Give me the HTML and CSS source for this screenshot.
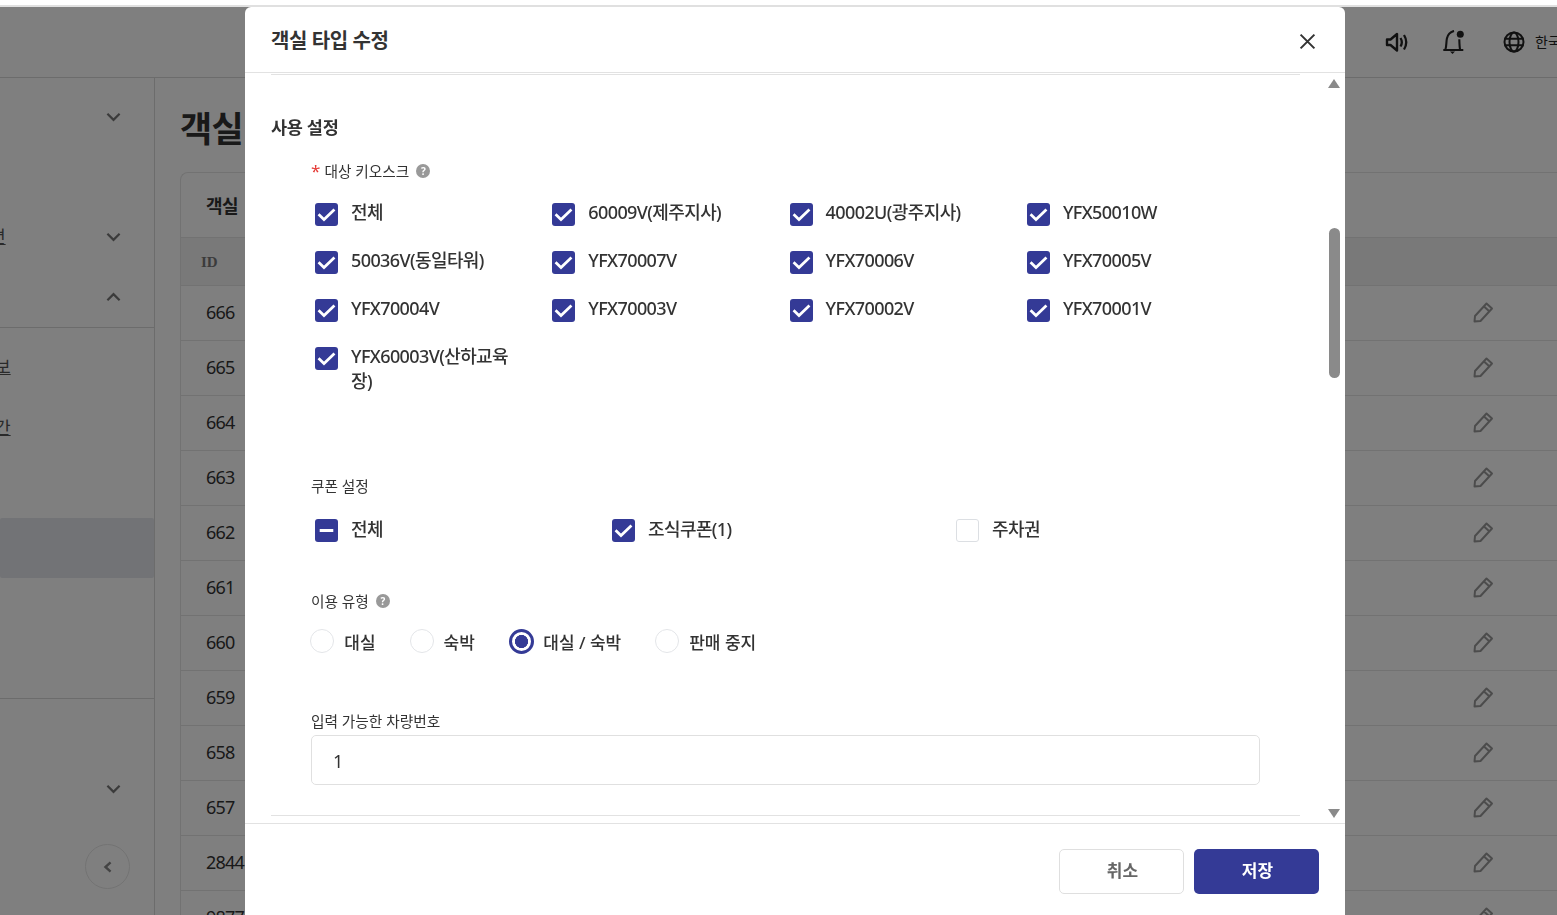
FILE: index.html
```html
<!DOCTYPE html>
<html lang="ko">
<head>
<meta charset="utf-8">
<title>객실 타입 수정</title>
<link rel="stylesheet" href="styles.css">
</head>
<body>
<svg class="sprites" width="0" height="0" aria-hidden="true">
  <symbol id="chev" viewBox="0 0 16 10"><path d="M1.500 1.500 8 8l6.500-6.500" fill="none" stroke="currentColor" stroke-width="2.400"/></symbol>
  <symbol id="pencil" viewBox="0 0 24 24"><path d="M3.500 21.500 4 16 15.500 3.500 21 8.500 9.500 21 3.500 21.500ZM13 6.500l5.500 5" fill="none" stroke="currentColor" stroke-width="2" stroke-linejoin="round"/></symbol>
  <symbol id="check" viewBox="0 0 22 22"><path d="M3.400 10.800 8.600 15.800 18.600 6.200" fill="none" stroke="#fff" stroke-width="2.600"/></symbol>
  <symbol id="dash" viewBox="0 0 22 22"><path d="M4.500 11h13" fill="none" stroke="#fff" stroke-width="2.800"/></symbol>
</svg>
<div class="page">
  <header class="topbar">
    <svg class="ico ico-sound" viewBox="0 0 24 24"><path d="M3 9.500h3.500L13 4v16.500L6.500 15H3z" fill="none" stroke="currentColor" stroke-width="2.400" stroke-linejoin="round"/><path d="M16.500 8c1.600 2.600 1.600 6 0 8.500M20 5c2.800 4.500 2.800 10 0 14.500" fill="none" stroke="currentColor" stroke-width="2.300"/></svg>
    <svg class="ico ico-bell" viewBox="0 0 24 28"><path d="M1.300 20h20M3.300 20c1.400-4 .8-8 1.600-11.500C5.800 4.500 8.500 1.800 12 .9M17.300 9.300c.1 3.800.2 7.500.8 10.700" fill="none" stroke="currentColor" stroke-width="2.100"/><path d="M8 21.500h5L10.500 24z" fill="currentColor"/><circle cx="18.300" cy="4.300" r="3.500" fill="currentColor"/></svg>
    <svg class="ico ico-globe" viewBox="0 0 24 24"><g fill="none" stroke="currentColor" stroke-width="2"><circle cx="12" cy="12" r="9.500"/><ellipse cx="12" cy="12" rx="4.500" ry="9.500"/><path d="M2.500 8.700h19M2.500 15.300h19"/></g></svg>
    <span class="lang">한국어</span>
  </header>
  <div class="layout">
    <aside class="side">
      <div class="side-group">
        <div class="side-row"><svg class="chev"><use href="#chev"/></svg></div>
        <div class="side-row"></div>
        <div class="side-row"><span class="side-text side-text-near">면</span><svg class="chev"><use href="#chev"/></svg></div>
        <div class="side-row"><svg class="chev chev-up"><use href="#chev"/></svg></div>
      </div>
      <div class="side-group side-group-b">
        <div class="side-row"><span class="side-text">보</span></div>
        <div class="side-row"><span class="side-text side-text-low">간</span></div>
        <div class="side-row"></div>
        <div class="side-row side-row-active"></div>
        <div class="side-row"></div>
        <div class="side-row"></div>
      </div>
      <div class="side-group side-group-c">
        <div class="side-row"></div>
        <div class="side-row"><svg class="chev"><use href="#chev"/></svg></div>
      </div>
      <div class="collapse"><svg viewBox="0 0 14 16"><path d="M10 2.500 4 8l6 5.500" fill="none" stroke="currentColor" stroke-width="2.800"/></svg></div>
    </aside>
    <main class="main">
      <h1 class="main-title">객실</h1>
      <section class="card">
        <div class="card-title">객실</div>
        <div class="tr tr-head"><span class="td-id">ID</span></div>
        <div class="tr"><span class="td">666</span><svg class="pen"><use href="#pencil"/></svg></div>
        <div class="tr"><span class="td">665</span><svg class="pen"><use href="#pencil"/></svg></div>
        <div class="tr"><span class="td">664</span><svg class="pen"><use href="#pencil"/></svg></div>
        <div class="tr"><span class="td">663</span><svg class="pen"><use href="#pencil"/></svg></div>
        <div class="tr"><span class="td">662</span><svg class="pen"><use href="#pencil"/></svg></div>
        <div class="tr"><span class="td">661</span><svg class="pen"><use href="#pencil"/></svg></div>
        <div class="tr"><span class="td">660</span><svg class="pen"><use href="#pencil"/></svg></div>
        <div class="tr"><span class="td">659</span><svg class="pen"><use href="#pencil"/></svg></div>
        <div class="tr"><span class="td">658</span><svg class="pen"><use href="#pencil"/></svg></div>
        <div class="tr"><span class="td">657</span><svg class="pen"><use href="#pencil"/></svg></div>
        <div class="tr"><span class="td">2844</span><svg class="pen"><use href="#pencil"/></svg></div>
        <div class="tr"><span class="td">9877</span><svg class="pen"><use href="#pencil"/></svg></div>
      </section>
    </main>
  </div>
</div>
<div class="backdrop"></div>
<div class="modal" role="dialog">
  <div class="modal-head">
    <h2 class="modal-title">객실 타입 수정</h2>
    <svg class="close" viewBox="0 0 16 16"><path d="M1.500 1.500l13 13M14.500 1.500l-13 13" fill="none" stroke="currentColor" stroke-width="1.900"/></svg>
  </div>
  <div class="modal-body">
    <div class="scroll-content">
      <h3 class="section-title">사용 설정</h3>
      <div class="field-label field-label-kiosk"><span class="req">*</span> 대상 키오스크 <span class="help">?</span></div>
      <div class="check-grid">
        <label class="check"><svg class="box"><use href="#check"/></svg><span>전체</span></label>
        <label class="check"><svg class="box"><use href="#check"/></svg><span>60009V(제주지사)</span></label>
        <label class="check"><svg class="box"><use href="#check"/></svg><span>40002U(광주지사)</span></label>
        <label class="check"><svg class="box"><use href="#check"/></svg><span>YFX50010W</span></label>
        <label class="check"><svg class="box"><use href="#check"/></svg><span>50036V(동일타워)</span></label>
        <label class="check"><svg class="box"><use href="#check"/></svg><span>YFX70007V</span></label>
        <label class="check"><svg class="box"><use href="#check"/></svg><span>YFX70006V</span></label>
        <label class="check"><svg class="box"><use href="#check"/></svg><span>YFX70005V</span></label>
        <label class="check"><svg class="box"><use href="#check"/></svg><span>YFX70004V</span></label>
        <label class="check"><svg class="box"><use href="#check"/></svg><span>YFX70003V</span></label>
        <label class="check"><svg class="box"><use href="#check"/></svg><span>YFX70002V</span></label>
        <label class="check"><svg class="box"><use href="#check"/></svg><span>YFX70001V</span></label>
        <label class="check"><svg class="box"><use href="#check"/></svg><span>YFX60003V(산하교육장)</span></label>
      </div>
      <div class="field-label field-label-coupon">쿠폰 설정</div>
      <div class="coupon-row">
        <label class="check"><svg class="box"><use href="#dash"/></svg><span>전체</span></label>
        <label class="check"><svg class="box"><use href="#check"/></svg><span>조식쿠폰(1)</span></label>
        <label class="check"><span class="box-empty"></span><span>주차권</span></label>
      </div>
      <div class="field-label field-label-type">이용 유형 <span class="help">?</span></div>
      <div class="radio-row">
        <label class="radio"><span class="dot"></span>대실</label>
        <label class="radio"><span class="dot"></span>숙박</label>
        <label class="radio"><span class="dot dot-on"></span>대실 / 숙박</label>
        <label class="radio"><span class="dot"></span>판매 중지</label>
      </div>
      <div class="field-label field-label-car">입력 가능한 차량번호</div>
      <div class="text-input">1</div>
    </div>
    <div class="scrollbar">
      <span class="arrow arrow-up"></span>
      <span class="thumb"></span>
      <span class="arrow arrow-down"></span>
    </div>
  </div>
  <div class="modal-foot">
    <button class="btn btn-cancel" type="button">취소</button>
    <button class="btn btn-save" type="button">저장</button>
  </div>
</div>
</body>
</html>
```
FILE: styles.css
```css
* { box-sizing: border-box; }
html, body { margin: 0; height: 915px; overflow: hidden; }
body {
  font-family: "Noto Sans", "Noto Sans CJK KR", sans-serif;
  color: #333;
  background: #fff;
  position: relative;
  border-top: 5px solid #fff;
}
.sprites { position: absolute; }

.page { height: 910px; overflow: hidden; border-top: 2px solid #e0e0e0; }
.topbar {
  height: 71px;
  border-bottom: 1px solid #d9d9d9;
  color: #222;
  position: relative;
}
.ico { position: absolute; }
.ico-sound { left: 1384px; top: 23px; width: 24px; height: 24px; }
.ico-bell { left: 1442px; top: 23px; width: 24px; height: 28px; }
.ico-globe { left: 1502px; top: 23px; width: 24px; height: 24px; }
.lang { position: absolute; left: 1535px; top: 24px; font-size: 14px; white-space: nowrap; }

.layout { display: flex; height: 837px; }
.side {
  width: 155px;
  flex: none;
  border-right: 1px solid #d9d9d9;
  padding-top: 9px;
  position: relative;
}
.side-group { border-bottom: 1px solid #d9d9d9; }
.side-group-b { padding-top: 10px; }
.side-group-c { border-bottom: 0; }
.side-row { height: 60px; display: flex; align-items: center; position: relative; }
.side-row-active { background: #e4e7ec; border-radius: 2px; }
.side-text { font-size: 17px; color: #555; margin-left: -5px; padding-bottom: 5px; text-decoration: underline; }
.side-text-near { margin-left: -10px; padding-bottom: 3px; }
.side-text-low { padding-bottom: 3px; }
.chev { position: absolute; left: 106px; top: 25px; width: 15px; height: 10px; color: #777; }
.chev-up { transform: rotate(180deg); }
.collapse {
  position: absolute;
  left: 85px;
  top: 766px;
  width: 45px;
  height: 45px;
  border: 1px solid #e6e6e6;
  border-radius: 50%;
  display: flex;
  align-items: center;
  justify-content: center;
  color: #888;
}
.collapse svg { width: 12px; height: 16px; }

.main { flex: 1; padding: 27px 0 0 25px; min-width: 0; }
.main-title { margin: 0 0 19px; font-size: 35px; line-height: 48px; font-weight: 700; color: #333; letter-spacing: -.6px; }
.card { border: 1px solid #e4e4e4; border-right: 0; border-radius: 8px 0 0 0; }
.card-title { height: 64px; padding-left: 25px; font-size: 18px; font-weight: 700; line-height: 66px; letter-spacing: -.5px; }
.tr {
  height: 55px;
  border-top: 1px solid #e4e4e4;
  display: flex;
  align-items: center;
  padding: 0 0 2px 25px;
  position: relative;
}
.tr-head { height: 48px; background: #f3f3f3; padding: 2px 0 0 20px; }
.td { font-size: 18px; letter-spacing: -.8px; color: #333; }
.td-id { font-family: "Liberation Serif", serif; font-size: 15px; font-weight: 700; color: #777; }
.pen { position: absolute; left: 1290px; top: 14px; width: 24px; height: 24px; color: #999; }

.backdrop { position: fixed; inset: 7px 0 0; background: rgba(0, 0, 0, .5); }

.modal {
  position: fixed;
  left: 245px;
  top: 7px;
  width: 1100px;
  height: 908px;
  background: #fff;
  border-radius: 6px 6px 0 0;
  display: flex;
  flex-direction: column;
}
.modal-head {
  height: 66px;
  flex: none;
  border-bottom: 1px solid #e2e2e2;
  display: flex;
  align-items: center;
  justify-content: space-between;
  padding: 2px 29px 0 26px;
}
.modal-title { margin: 0 0 2px; font-size: 20px; font-weight: 700; color: #333; letter-spacing: -.4px; }
.close { width: 17px; height: 17px; margin-top: 1px; color: #333; }

.modal-body { height: 750px; flex: none; position: relative; padding: 1px 45px 0 26px; overflow: hidden; }
.scroll-content {
  height: 742px;
  border-top: 1px solid #e2e2e2;
  border-bottom: 1px solid #e2e2e2;
  padding: 39px 0 0 40px;
  overflow: hidden;
}
.section-title { margin: 0 0 21px -40px; font-size: 17.500px; line-height: 26px; font-weight: 700; color: #333; letter-spacing: -.3px; }
.field-label { font-size: 14.700px; line-height: 20px; color: #333; display: flex; align-items: center; gap: 5px; height: 20px; }
.field-label-kiosk { margin-bottom: 20px; }
.field-label-coupon { margin-top: 30px; margin-bottom: 21px; }
.field-label-type { margin-top: 46px; margin-bottom: 17px; }
.field-label-car { margin-top: 57px; margin-bottom: 4px; }
.req { color: #e53935; font-size: 17px; margin-right: -1px; }
.help {
  width: 14px;
  height: 14px;
  margin-left: 2px;
  border-radius: 50%;
  background: #999;
  color: #fff;
  font-size: 10px;
  font-weight: 700;
  line-height: 14px;
  text-align: center;
}

.check-grid {
  display: grid;
  grid-template-columns: repeat(4, 237.300px);
  grid-auto-rows: 48px;
  padding-left: 4px;
  height: 245px;
}
.check { display: flex; align-items: flex-start; gap: 13px; font-size: 18px; font-weight: 500; line-height: 25px; letter-spacing: -.6px; color: #333; }
.check > span:last-child { width: 165px; word-break: break-all; }
.check-grid .check > span:last-child { margin-top: -1px; }
.box { width: 23px; height: 23px; flex: none; background: #343a96; border-radius: 3px; margin-top: 2px; }
.box-empty { width: 23px; height: 23px; flex: none; border: 1px solid #dcdfe3; border-radius: 3px; margin-top: 2px; }
.coupon-row { display: grid; grid-template-columns: 297px 344px 1fr; padding-left: 4px; height: 28px; }

.radio-row { display: flex; height: 26px; align-items: center; margin-left: -.7px; }
.radio { display: flex; align-items: center; gap: 10px; font-size: 17px; font-weight: 500; letter-spacing: 0; color: #333; margin-right: 34px; }
.dot { width: 24px; height: 24px; border-radius: 50%; border: 1px solid #e3e5e8; flex: none; }
.dot-on { width: 25px; height: 25px; margin-right: -.6px; border: 3px solid #343a96; background: radial-gradient(circle, #343a96 0 6.300px, #fff 6.800px); }

.text-input {
  width: 949px;
  height: 50px;
  border: 1px solid #e0e0e0;
  border-radius: 5px;
  padding-left: 21px;
  font-size: 18px;
  line-height: 50px;
}

.scrollbar { position: absolute; left: 1083px; top: 0; width: 12px; height: 750px; }
.arrow { position: absolute; left: 0; width: 0; height: 0; border-left: 6px solid transparent; border-right: 6px solid transparent; }
.arrow-up { top: 6px; border-bottom: 9px solid #8a8a8a; }
.arrow-down { top: 736px; border-top: 9px solid #8a8a8a; }
.thumb { position: absolute; left: 1px; top: 155px; width: 11px; height: 150px; background: #8a8a8a; border-radius: 6px; }

.modal-foot {
  flex: 1;
  border-top: 1px solid #e2e2e2;
  padding: 25px 26px 0 0;
  display: flex;
  justify-content: flex-end;
  gap: 10px;
}
.btn {
  width: 125px;
  height: 45px;
  padding: 0 0 4px 2px;
  border-radius: 5px;
  font-family: inherit;
  font-size: 17px;
  font-weight: 700;
  letter-spacing: 0;
}
.btn-cancel { background: #fff; border: 1px solid #dfdfdf; color: #666; }
.btn-save { background: #343a96; border: 0; color: #fff; }
```
